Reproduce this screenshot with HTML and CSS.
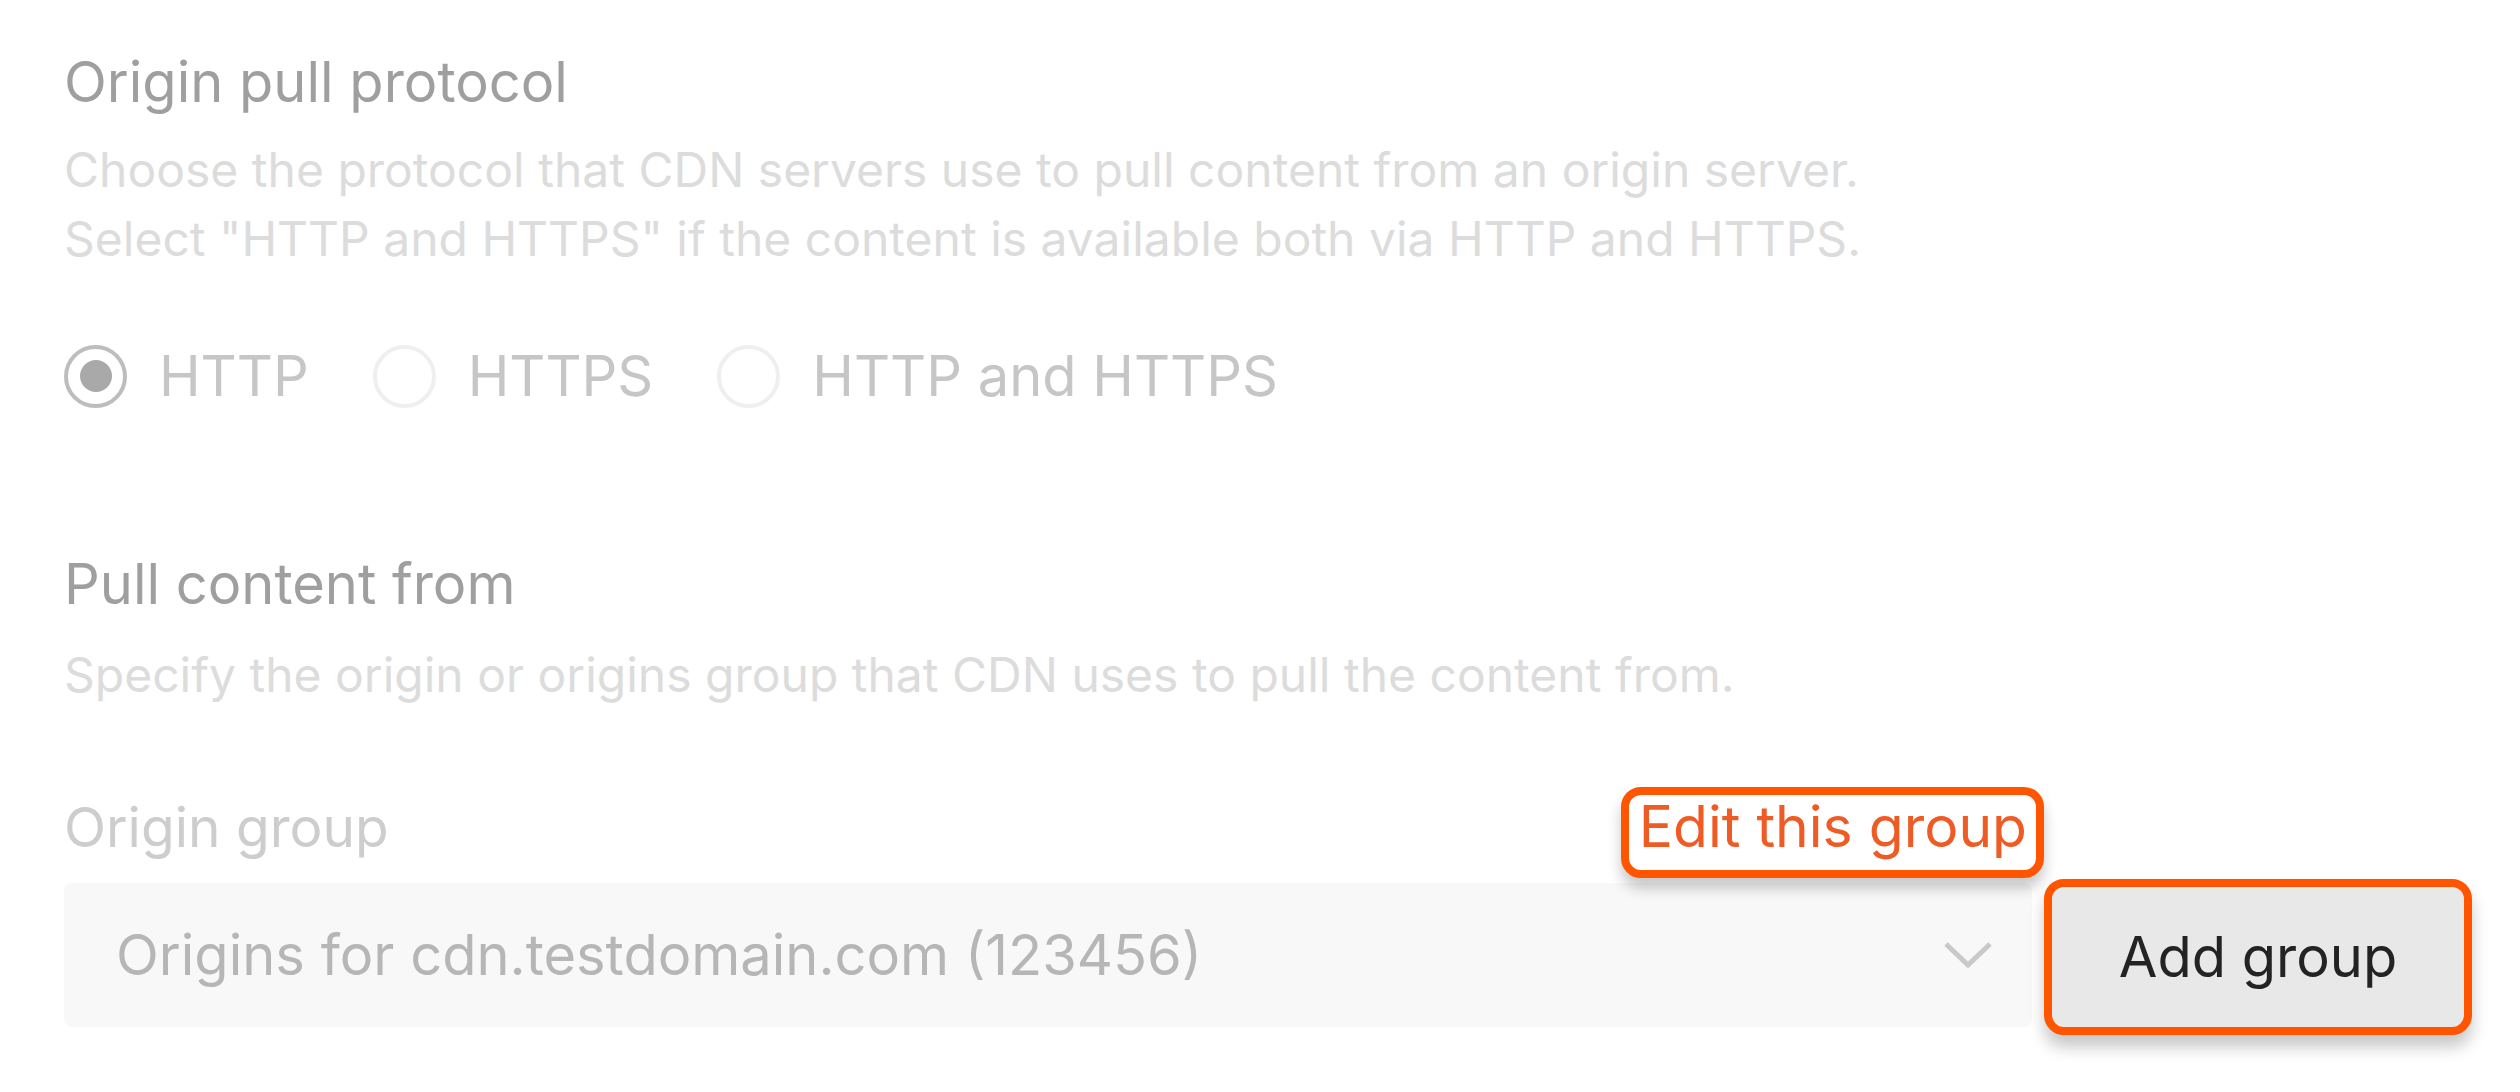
FILE: index.html
```html
<!DOCTYPE html>
<html lang="en">
<head>
<meta charset="utf-8">
<title>Origin settings</title>
<link rel="stylesheet" href="styles.css">
</head>
<body>
<main class="page">
  <section class="section">
    <h2 class="section-title">Origin pull protocol</h2>
    <p class="section-desc">Choose the protocol that CDN servers use to pull content from an origin server.<br>Select "HTTP and HTTPS" if the content is available both via HTTP and HTTPS.</p>
    <div class="radio-group">
      <label class="radio checked"><span class="radio-circle"><span class="radio-dot"></span></span><span class="radio-label">HTTP</span></label>
      <label class="radio"><span class="radio-circle"></span><span class="radio-label">HTTPS</span></label>
      <label class="radio"><span class="radio-circle"></span><span class="radio-label">HTTP and HTTPS</span></label>
    </div>
  </section>

  <section class="section section-pull">
    <h2 class="section-title">Pull content from</h2>
    <p class="section-desc desc-pull">Specify the origin or origins group that CDN uses to pull the content from.</p>

    <div class="field">
      <div class="field-head">
        <span class="field-label">Origin group</span>
        <a class="edit-link">Edit this group</a>
      </div>
      <div class="field-row">
        <div class="select">
          <span class="select-value">Origins for cdn.testdomain.com (123456)</span>
          <svg class="chevron" width="48" height="26" viewBox="0 0 48 26"><polyline points="2,2 24,23 46,2" fill="none" stroke="#c9c9c9" stroke-width="5"/></svg>
        </div>
        <button class="add-btn">Add group</button>
      </div>
    </div>
  </section>
</main>
</body>
</html>
```

FILE: styles.css
```css
* { box-sizing: border-box; }
html, body { margin: 0; padding: 0; background: #ffffff; }
body {
  font-family: Inter, "Noto Sans", "Liberation Sans", sans-serif;
  width: 2520px;
  height: 1092px;
  overflow: hidden;
}
.page {
  padding: 46px 48px 0 64px;
  display: flex;
  flex-direction: column;
}
.section { display: flex; flex-direction: column; }
.section-title {
  margin: 0;
  font-size: 56px;
  line-height: 72px;
  font-weight: 400;
  color: #9f9f9f;
}
.section-desc {
  margin: 17px 0 0;
  font-size: 48px;
  line-height: 69px;
  color: #dcdcdc;
}
.desc-pull { margin-top: 20px; }
.radio-group {
  display: flex;
  align-items: center;
  gap: 64px;
  margin-top: 67px;
}
.radio {
  display: flex;
  align-items: center;
  gap: 32px;
}
.radio-circle {
  width: 63px;
  height: 63px;
  border-radius: 50%;
  border: 4px solid #efefef;
  display: flex;
  align-items: center;
  justify-content: center;
}
.radio.checked .radio-circle { border-color: #bdbdbd; }
.radio-dot {
  width: 32px;
  height: 32px;
  border-radius: 50%;
  background: #a9a9a9;
}
.radio-label {
  font-size: 56px;
  line-height: 72px;
  color: #c6c6c6;
}
.section-pull { margin-top: 136px; }
.field { margin-top: 78px; display: flex; flex-direction: column; }
.field-head {
  display: flex;
  align-items: baseline;
  justify-content: space-between;
  width: 1980px;
}
.field-label {
  font-size: 55px;
  line-height: 72px;
  color: #cdcdcd;
}
.edit-link {
  font-size: 57px;
  line-height: 64px;
  color: #ef5b25;
  border: 8px solid #ff5500;
  border-radius: 20px;
  padding: 0 9px 11px 10px;
  background: #ffffff;
  box-shadow: 0 10px 14px rgba(0, 0, 0, 0.22);
  position: relative;
  z-index: 2;
}
.field-row {
  display: flex;
  align-items: flex-start;
  gap: 12px;
  margin-top: 1px;
}
.select {
  flex: 1;
  height: 144px;
  margin-top: 4px;
  background: #f8f8f8;
  border-radius: 8px;
  display: flex;
  align-items: center;
  justify-content: space-between;
  padding: 0 40px 0 52px;
}
.select-value {
  font-size: 56px;
  line-height: 72px;
  color: #b6b6b6;
}
.chevron { display: block; }
.add-btn {
  width: 428px;
  height: 156px;
  border: 8px solid #ff5500;
  border-radius: 20px;
  background: #e8e8e8;
  font-family: Inter, "Noto Sans", "Liberation Sans", sans-serif;
  font-size: 56px;
  line-height: 72px;
  color: #232323;
  padding: 0;
  box-shadow: 0 12px 16px rgba(0, 0, 0, 0.22);
}
```
